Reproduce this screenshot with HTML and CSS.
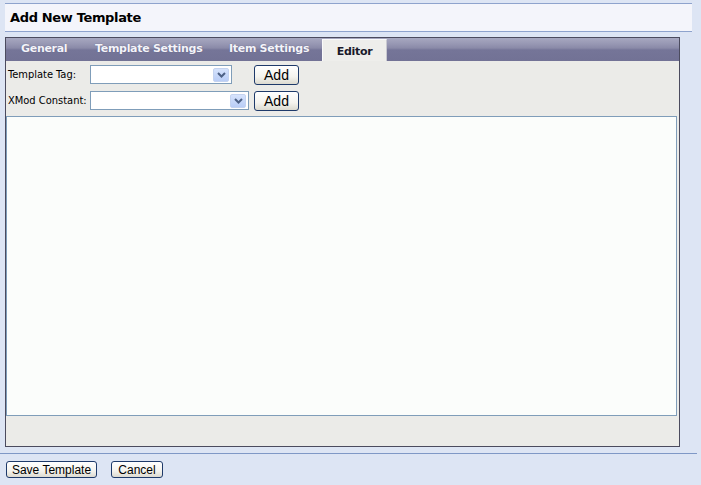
FILE: index.html
```html
<!DOCTYPE html>
<html>
<head>
<meta charset="utf-8">
<title>Add New Template</title>
<link rel="stylesheet" href="styles.css">
</head>
<body>
<div class="header"><h1 class="title">Add New Template</h1></div>
<div class="panel">
  <div class="tabs">
    <span class="tab tab-general">General</span>
    <span class="tab tab-settings">Template Settings</span>
    <span class="tab tab-item">Item Settings</span>
    <span class="tab tab-active">Editor</span>
  </div>
  <div class="content">
    <div class="row">
      <span class="label">Template Tag:</span>
      <span class="select select-tag"><span class="arrow"><svg width="9" height="6" viewBox="0 0 9 6"><path d="M1 1 L4.5 4.5 L8 1" fill="none" stroke="#4d6185" stroke-width="2"/></svg></span></span>
      <button class="btn btn-add btn-add1">Add</button>
    </div>
    <div class="row">
      <span class="label">XMod Constant:</span>
      <span class="select select-const"><span class="arrow"><svg width="9" height="6" viewBox="0 0 9 6"><path d="M1 1 L4.5 4.5 L8 1" fill="none" stroke="#4d6185" stroke-width="2"/></svg></span></span>
      <button class="btn btn-add btn-add2">Add</button>
    </div>
    <div class="editor"></div>
  </div>
</div>
<div class="separator"></div>
<div class="actions">
  <button class="btn btn-save">Save Template</button>
  <button class="btn btn-cancel">Cancel</button>
</div>
</body>
</html>
```
FILE: styles.css
```css
html, body {
  margin: 0;
  padding: 0;
  background: #dde5f4;
  font-family: "Liberation Sans", Arial, sans-serif;
  font-size: 11px;
  color: #000;
}
.header {
  margin: 3px 9px 0 5px;
  height: 27px;
  background: #f4f5fb;
  border-top: 1px solid #8ea3cd;
  border-bottom: 1px solid #8ea3cd;
  display: flex;
  align-items: center;
}
.title {
  margin: 0 0 0 5px;
  font-family: "DejaVu Sans", Verdana, sans-serif;
  font-size: 13px;
  font-weight: bold;
  letter-spacing: -0.35px;
  color: #000;
}
.panel {
  margin: 5px 0 0 5px;
  width: 673px;
  height: 408px;
  border: 1px solid #4b4b5e;
  background: #ebebe8;
  display: flex;
  flex-direction: column;
}
.tabs {
  height: 23px;
  background: linear-gradient(to bottom, #a7a8c0 0px, #9797b3 6px, #8a8aa8 10px, #757598 12px, #727295 23px);
  display: flex;
  align-items: flex-end;
  flex-shrink: 0;
}
.tab {
  font-family: "DejaVu Sans", Verdana, sans-serif;
  font-weight: bold;
  font-size: 11px;
  letter-spacing: -0.3px;
  color: #f4f4fa;
  text-shadow: 0 0 1px #5a5a7a;
  height: 22px;
  line-height: 20px;
  box-sizing: border-box;
  white-space: nowrap;
}
.tab-general { margin-left: 15px; width: 74px; }
.tab-settings { width: 134px; }
.tab-item { width: 93px; }
.tab-active {
  width: 65px;
  text-align: center;
  color: #1a1a2a;
  text-shadow: none;
  background: #eeeeeb;
  border-top: 1px solid #fafafa;
  border-left: 1px solid #fafafa;
  border-right: 1px solid #c8c8d0;
  line-height: 24px;
}
.content {
  flex: 1;
  display: flex;
  flex-direction: column;
}
.row {
  display: flex;
  align-items: center;
  height: 19px;
  margin-top: 4px;
}
.row + .row { margin-top: 7px; }
.label {
  width: 82px;
  padding-left: 2px;
  font-family: "DejaVu Sans Condensed", "DejaVu Sans", sans-serif;
  font-size: 11px;
  letter-spacing: 0;
  white-space: nowrap;
}
.select {
  height: 19px;
  box-sizing: border-box;
  border: 1px solid #7f9db9;
  background: #fff;
  display: flex;
  justify-content: flex-end;
  align-items: center;
  padding-right: 2px;
}
.select-tag { width: 142px; margin-right: 22px; }
.select-const { width: 159px; margin-right: 5px; }
.arrow {
  width: 16px;
  height: 14px;
  background: linear-gradient(to bottom, #d6e3fc, #b9cdf6);
  border: 1px solid #c4d3f0;
  border-radius: 2px;
  box-sizing: border-box;
  display: flex;
  align-items: center;
  justify-content: center;
}
.btn {
  font-family: "Liberation Sans", Arial, sans-serif;
  border: 1px solid #1e3a6a;
  border-radius: 3px;
  background: linear-gradient(to bottom, #ffffff 0%, #f4f3ee 60%, #dcdad0 100%);
  padding: 0;
  margin: 0;
  color: #000;
  box-sizing: border-box;
}
.btn-add {
  width: 45px;
  height: 20px;
  font-size: 14px;
  line-height: 16px;
}
.editor {
  margin: 6px 2px 0 0;
  height: 300px;
  border: 1px solid #7f9db9;
  background: #fbfdfb;
  box-sizing: border-box;
}
.separator {
  margin: 6px 4px 0 0;
  height: 1px;
  background: #7f98c6;
}
.actions {
  display: flex;
  margin: 7px 0 0 6px;
}
.btn-save {
  width: 91px;
  height: 17px;
  font-size: 12px;
  line-height: 14px;
}
.btn-cancel {
  margin-left: 14px;
  width: 52px;
  height: 17px;
  font-size: 12px;
  line-height: 14px;
}
```
